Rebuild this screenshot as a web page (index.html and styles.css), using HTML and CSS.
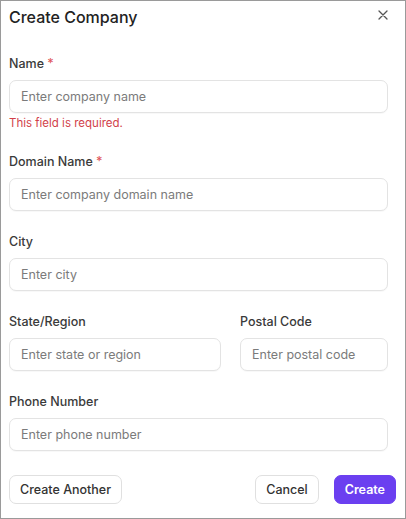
FILE: index.html
```html
<!DOCTYPE html>
<html>
<head>
<meta charset="utf-8">
<link rel="stylesheet" href="styles.css">
</head>
<body>
<div class="dialog">
  <div class="header">
    <h1 class="title">Create Company</h1>
    <button class="close" aria-label="Close">
      <svg width="10" height="10" viewBox="0 0 10 10"><path d="M1 1L9 9M9 1L1 9" stroke="#555" stroke-width="1.3" stroke-linecap="round"/></svg>
    </button>
  </div>
  <div class="form">
    <div class="field">
      <label class="label">Name <span class="req">*</span></label>
      <input class="input" placeholder="Enter company name">
      <div class="error">This field is required.</div>
    </div>
    <div class="field">
      <label class="label">Domain Name <span class="req">*</span></label>
      <input class="input" placeholder="Enter company domain name">
    </div>
    <div class="field">
      <label class="label">City</label>
      <input class="input" placeholder="Enter city">
    </div>
    <div class="row">
      <div class="field">
        <label class="label">State/Region</label>
        <input class="input" placeholder="Enter state or region">
      </div>
      <div class="field">
        <label class="label">Postal Code</label>
        <input class="input" placeholder="Enter postal code">
      </div>
    </div>
    <div class="field">
      <label class="label">Phone Number</label>
      <input class="input" placeholder="Enter phone number">
    </div>
  </div>
  <div class="footer">
    <button class="btn">Create Another</button>
    <div class="spacer"></div>
    <button class="btn">Cancel</button>
    <button class="btn primary">Create</button>
  </div>
</div>
</body>
</html>
```
FILE: styles.css
```css
* { box-sizing: border-box; }
html, body { margin: 0; padding: 0; background: #fff; }
body { font-family: Inter, "Noto Sans", sans-serif; color: #2b2b2b; }
.dialog {
  width: 406px;
  height: 519px;
  border: 1px solid #9a9a9a;
  background: #fff;
  display: flex;
  flex-direction: column;
}
.header {
  display: flex;
  align-items: flex-start;
  justify-content: space-between;
  padding: 4px 17px 0 8px;
}
.title {
  margin: 0;
  font-size: 16px;
  line-height: 24px;
  font-weight: 450;
  color: #222;
}
.close {
  border: 0;
  background: none;
  padding: 0;
  margin-top: 5px;
  width: 10px;
  height: 10px;
  display: flex;
}
.form {
  padding: 25px 17px 0 8px;
  display: flex;
  flex-direction: column;
  gap: 21px;
}
.field {
  display: flex;
  flex-direction: column;
}
.label {
  font-size: 12.5px;
  line-height: 20px;
  font-weight: 450;
  color: #3a3a3a;
  margin-bottom: 6px;
}
.req { color: #e0575c; }
.input {
  height: 33px;
  border: 1px solid #e3e3e3;
  border-radius: 7px;
  padding: 0 11px;
  font-family: inherit;
  font-size: 12.5px;
  color: #333;
  background: #fff;
  box-shadow: 0 1px 1px rgba(0,0,0,0.03);
  width: 100%;
}
.input::placeholder { color: #7b7b7b; }
.error {
  font-size: 11.5px;
  line-height: 16px;
  color: #d23f4a;
  margin-top: 2px;
}
.row {
  display: grid;
  grid-template-columns: 1fr 148px;
  column-gap: 19px;
}
.footer {
  margin-top: auto;
  padding: 0 9px 14px 8px;
  display: flex;
  align-items: center;
  gap: 15px;
}
.spacer { flex: 1; }
.btn {
  height: 29px;
  padding: 0 10px;
  border: 1px solid #e0e0e0;
  border-radius: 7px;
  background: #fff;
  font-family: inherit;
  font-size: 12.5px;
  font-weight: 450;
  color: #333;
}
.primary {
  background: #6b3ff0;
  border-color: #6b3ff0;
  color: #fff;
  font-weight: 600;
}
```
